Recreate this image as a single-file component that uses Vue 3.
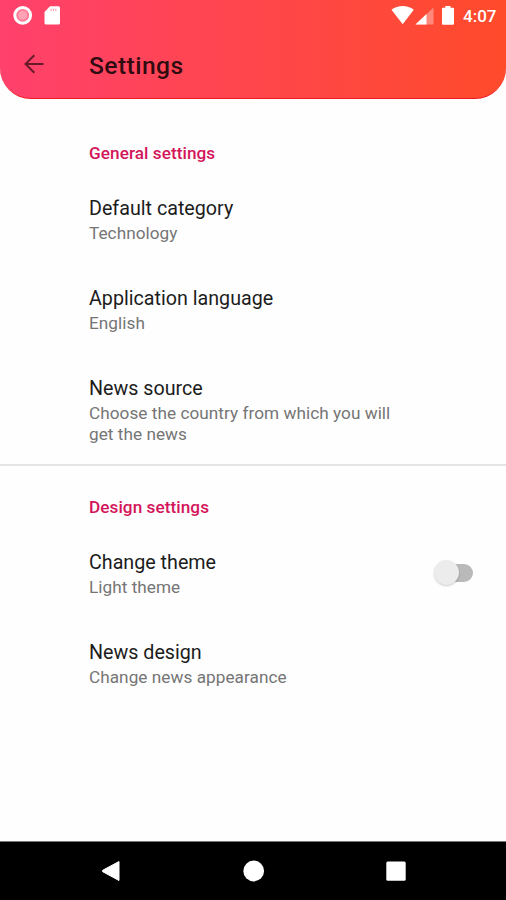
<template>
  <div class="screen">
    <header class="header">
      <div class="status-bar">
        <svg class="status-left" width="64" height="30" viewBox="0 0 64 30">
          <circle cx="22.7" cy="15.3" r="7.6" fill="#fff" opacity="0.3" />
          <circle cx="22.7" cy="15.3" r="4.5" fill="#fff" opacity="0.3" />
          <circle cx="22.7" cy="15.3" r="7.9" fill="none" stroke="#fff" stroke-width="3" />
          <path d="M50 6.2h8.500a1.500 1.500 0 0 1 1.500 1.500v15.300a1.500 1.500 0 0 1-1.500 1.500h-12.500a1.500 1.500 0 0 1-1.500-1.500V12z" fill="#fff" />
          <path d="M51.200 8.800v2.200M53.500 8.800v2.200M55.800 8.800v2.200" stroke="#ff9db2" stroke-width="1.200" />
        </svg>
        <div class="status-right">
          <svg width="68" height="30" viewBox="0 0 68 30">
            <path d="M11.700 24.200L0.500 9.700C7.200 4.800 16.300 4.800 22.800 9.700z" fill="#fff" />
            <path d="M42.500 7.500v17h-18z" fill="#fff" opacity="0.35" />
            <path d="M35.500 14.100v10.400h-11z" fill="#fff" />
            <path d="M54.300 6h5.200v1.800h2.500a1 1 0 0 1 1 1v14.900a1 1 0 0 1-1 1h-10a1 1 0 0 1-1-1V8.800a1 1 0 0 1 1-1h2.300z" fill="#fff" />
          </svg>
          <span class="clock">4:07</span>
        </div>
      </div>
      <div class="toolbar">
        <svg class="back" width="20" height="20" viewBox="0 0 20 20">
          <path d="M19.500 10H1.500M10.300 1.200L1.500 10l8.800 8.800" fill="none" stroke="#000" stroke-opacity="0.6" stroke-width="2" />
        </svg>
        <h1>Settings</h1>
      </div>
    </header>

    <main class="content">
      <section v-for="section in sections" :key="section.title" class="section">
        <h2>{{ section.title }}</h2>
        <div v-for="item in section.items" :key="item.title" class="item" @click="toggle(item)">
          <div class="item-text">
            <div class="item-title">{{ item.title }}</div>
            <div class="item-summary">{{ item.summary }}</div>
          </div>
          <div v-if="item.toggle" class="switch" :class="{ on: darkTheme }">
            <div class="thumb"></div>
          </div>
        </div>
      </section>
    </main>

    <nav class="nav-bar">
      <svg width="20" height="22" viewBox="0 0 20 22">
        <path d="M18 1.500v19L1.700 11.700a0.800 0.800 0 0 1 0-1.400z" fill="#fff" stroke="#fff" stroke-linejoin="round" />
      </svg>
      <svg width="22" height="22" viewBox="0 0 22 22">
        <circle cx="10.700" cy="11" r="10.400" fill="#fff" />
      </svg>
      <svg width="20" height="22" viewBox="0 0 20 22">
        <rect x="0.300" y="1.500" width="19.400" height="19.200" rx="1.500" fill="#fff" />
      </svg>
    </nav>
  </div>
</template>

<script setup>
import { ref } from 'vue'

const darkTheme = ref(false)

const sections = [
  {
    title: 'General settings',
    items: [
      { title: 'Default category', summary: 'Technology' },
      { title: 'Application language', summary: 'English' },
      { title: 'News source', summary: 'Choose the country from which you will get the news' }
    ]
  },
  {
    title: 'Design settings',
    items: [
      { title: 'Change theme', summary: 'Light theme', toggle: true },
      { title: 'News design', summary: 'Change news appearance' }
    ]
  }
]

function toggle(item) {
  if (item.toggle) darkTheme.value = !darkTheme.value
}
</script>

<style>
body {
  margin: 0;
}
</style>

<style scoped>
.screen {
  width: 506px;
  height: 900px;
  display: flex;
  flex-direction: column;
  background: #fefefe;
  font-family: Roboto, 'Liberation Sans', sans-serif;
  overflow: hidden;
}
.header {
  box-sizing: border-box;
  height: 99px;
  flex: none;
  background: linear-gradient(90deg, #ff416c, #ff4b2b);
  border-bottom: 1px solid #f01822;
  border-radius: 0 0 31px 31px;
}
.status-bar {
  height: 30px;
  display: flex;
  justify-content: space-between;
}
.status-right {
  display: flex;
  padding-right: 9px;
}
.clock {
  width: 38px;
  padding-left: 4px;
  box-sizing: border-box;
  font-size: 17px;
  font-weight: 500;
  line-height: 32px;
  color: #fff;
  white-space: nowrap;
}
.toolbar {
  height: 68px;
  display: flex;
  align-items: center;
}
.back {
  margin-left: 24px;
  width: 20px;
}
.toolbar h1 {
  margin: 0 0 0 45px;
  padding-top: 3px;
  font-size: 24.6px;
  font-weight: 500;
  line-height: 30px;
  letter-spacing: 0.45px;
  color: rgba(0, 0, 0, 0.84);
}
.content {
  flex: 1;
  padding-top: 30px;
}
.section + .section {
  border-top: 2px solid #e4e4e4;
  padding-top: 17px;
}
.section h2 {
  margin: 0;
  padding: 12px 0 12px 89px;
  font-size: 17.2px;
  font-weight: 500;
  line-height: 24px;
  letter-spacing: 0.05px;
  color: #d3155a;
}
.item {
  display: flex;
  align-items: center;
  justify-content: space-between;
  padding: 19px 33px 23px 89px;
}
.section:first-child .item:last-child {
  padding-bottom: 19px;
}
.item-text {
  width: 320px;
}
.item-title {
  margin-bottom: 1px;
  font-size: 19.7px;
  line-height: 26px;
  color: #1c1c1c;
}
.item-summary {
  font-size: 17.2px;
  line-height: 21px;
  letter-spacing: 0.04px;
  color: #757575;
}
.switch {
  width: 36px;
  height: 18px;
  margin-bottom: 2px;
  border-radius: 9px;
  background: #b9b9b9;
  position: relative;
}
.thumb {
  position: absolute;
  left: -3px;
  top: -4px;
  width: 25px;
  height: 25px;
  border-radius: 50%;
  background: #ececec;
  box-shadow: 0 1px 2px rgba(0, 0, 0, 0.2);
}
.switch.on .thumb {
  left: 14px;
}
.nav-bar {
  box-sizing: border-box;
  height: 59px;
  flex: none;
  padding: 0 100px 0 101px;
  border-top: 1px solid #777;
  background: #000;
  display: flex;
  align-items: center;
  justify-content: space-between;
}
</style>
